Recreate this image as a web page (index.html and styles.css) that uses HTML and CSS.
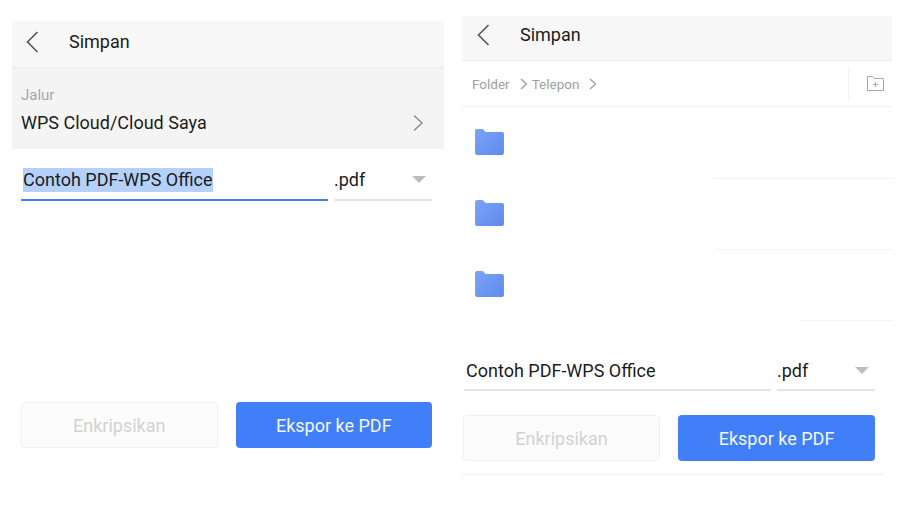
FILE: index.html
```html
<!DOCTYPE html>
<html lang="id">
<head>
  <meta charset="utf-8">
  <title>Simpan</title>
  <link rel="stylesheet" href="styles.css">
</head>
<body>
  <div class="screens">

    <!-- save to cloud path -->
    <section class="panel panel-cloud">
      <header class="topbar">
        <svg class="back" width="14" height="24" viewBox="0 0 14 24"><path d="M12.500 2 2.500 12l10 10"/></svg>
        <span class="topbar-title">Simpan</span>
      </header>
      <div class="path">
        <div class="path-label">Jalur</div>
        <div class="path-value">
          <span>WPS Cloud/Cloud Saya</span>
          <svg class="chevron" width="12" height="18" viewBox="0 0 12 18"><path d="M2 1.500 10 9l-8 7.500"/></svg>
        </div>
      </div>
      <div class="name-row">
        <div class="name-field name-field-active"><span class="selected">Contoh PDF-WPS Office</span></div>
        <div class="ext-field"><span>.pdf</span><i class="caret"></i></div>
      </div>
      <div class="actions">
        <button class="btn btn-disabled">Enkripsikan</button>
        <button class="btn btn-primary">Ekspor ke PDF</button>
      </div>
    </section>

    <!-- save to local folder -->
    <section class="panel panel-local">
      <header class="topbar">
        <svg class="back" width="14" height="24" viewBox="0 0 14 24"><path d="M12.500 2 2.500 12l10 10"/></svg>
        <span class="topbar-title">Simpan</span>
      </header>
      <div class="crumbs">
        <span>Folder</span>
        <svg class="crumb-arrow" width="8" height="12" viewBox="0 0 8 12"><path d="M1 1l5.500 5L1 11"/></svg>
        <span>Telepon</span>
        <svg class="crumb-arrow" width="8" height="12" viewBox="0 0 8 12"><path d="M1 1l5.500 5L1 11"/></svg>
        <div class="crumbs-add">
          <svg width="17" height="15" viewBox="0 0 17 15"><path d="M.5 14.500V.5h5l1.500 2h9.500v12zM8.500 6v5M6 8.500h5"/></svg>
        </div>
      </div>
      <ul class="folders">
        <li class="folder-row line-long"><svg class="folder" width="30" height="27" viewBox="0 0 30 27"><defs><linearGradient id="fill" x1="0" y1="0" x2="1" y2="1"><stop offset="0" stop-color="#7ba3f8"/><stop offset="1" stop-color="#5d8bee"/></linearGradient></defs><path fill="url(#fill)" d="M2 0h6l3 3h17a2 2 0 0 1 2 2v20a2 2 0 0 1-2 2H2a2 2 0 0 1-2-2V2a2 2 0 0 1 2-2z"/></svg></li>
        <li class="folder-row line-long"><svg class="folder" width="30" height="27" viewBox="0 0 30 27"><path fill="url(#fill)" d="M2 0h6l3 3h17a2 2 0 0 1 2 2v20a2 2 0 0 1-2 2H2a2 2 0 0 1-2-2V2a2 2 0 0 1 2-2z"/></svg></li>
        <li class="folder-row line-short"><svg class="folder" width="30" height="27" viewBox="0 0 30 27"><path fill="url(#fill)" d="M2 0h6l3 3h17a2 2 0 0 1 2 2v20a2 2 0 0 1-2 2H2a2 2 0 0 1-2-2V2a2 2 0 0 1 2-2z"/></svg></li>
      </ul>
      <div class="name-row">
        <div class="name-field"><span>Contoh PDF-WPS Office</span></div>
        <div class="ext-field"><span>.pdf</span><i class="caret"></i></div>
      </div>
      <div class="actions">
        <button class="btn btn-disabled">Enkripsikan</button>
        <button class="btn btn-primary">Ekspor ke PDF</button>
      </div>
      <div class="bottom-line"></div>
    </section>

  </div>
</body>
</html>
```

FILE: styles.css
```css
html, body {
  margin: 0;
  padding: 0;
  height: 100%;
  background: #ffffff;
}
body {
  color: #1c1c1c;
  font-family: Roboto, "Liberation Sans", sans-serif;
  font-size: 18px;
  overflow: hidden;
}
.screens {
  display: flex;
  align-items: flex-start;
  padding-left: 12px;
}
.panel {
  display: flex;
  flex-direction: column;
}
.panel-cloud {
  width: 432px;
  margin-top: 21px;
}
.panel-local {
  width: 430px;
  margin-top: 16px;
  margin-left: 18px;
}

/* top bar */
.topbar {
  display: flex;
  align-items: center;
  height: 41px;
  padding-bottom: 5px;
  background: #f7f7f7;
  border-bottom: 1px solid #ebebeb;
}
.panel-local .topbar {
  height: 37px;
  padding-bottom: 7px;
}
.back {
  margin-left: 13px;
  fill: none;
  stroke: #555555;
  stroke-width: 1.6;
}
.topbar-title {
  margin-left: 30px;
  font-size: 18px;
}
.panel-local .back {
  margin-left: 14px;
}

/* path block */
.path {
  height: 81px;
  padding: 18px 20px 0 9px;
  box-sizing: border-box;
  background: #f4f4f4;
}
.path-label {
  font-size: 15px;
  line-height: 18px;
  color: #a8a8a8;
}
.path-value {
  display: flex;
  justify-content: space-between;
  align-items: center;
  margin-top: 7px;
  line-height: 24px;
}
.chevron {
  fill: none;
  stroke: #8a8a8a;
  stroke-width: 1.4;
}

/* breadcrumb */
.crumbs {
  display: flex;
  align-items: center;
  height: 45px;
  padding-left: 10px;
  font-size: 13.500px;
  color: #a0a0a0;
  border-bottom: 1px solid #f0f0f0;
}
.crumb-arrow {
  margin: 0 4px 0 10px;
  fill: none;
  stroke: #9a9a9a;
  stroke-width: 1.2;
}
.crumbs-add {
  display: flex;
  align-items: center;
  height: 34px;
  margin-left: auto;
  padding: 0 8px 0 18px;
  border-left: 1px solid #f3f3f3;
}
.crumbs-add svg {
  fill: none;
  stroke: #a6a6a6;
  stroke-width: 1;
}

/* folder list */
.folders {
  margin: 0;
  padding: 0;
  list-style: none;
}
.folder-row {
  position: relative;
  display: flex;
  align-items: center;
  height: 71px;
  padding: 0 0 2px 13px;
  box-sizing: border-box;
}
.folder-row::after {
  content: "";
  position: absolute;
  right: 0;
  bottom: -1px;
  height: 1px;
  background: #f2f2f2;
}
.line-long::after {
  width: 177px;
}
.line-short::after {
  width: 92px;
}
.folder {
  width: 29px;
  height: 26px;
}

/* file name */
.name-row {
  display: flex;
  align-items: flex-end;
  gap: 6px;
  height: 52px;
  padding-left: 9px;
  width: 411px;
}
.panel-local .name-row {
  height: 71px;
  padding-left: 2px;
}
.name-field {
  flex: 0 0 307px;
  height: 32px;
  padding-left: 2px;
  box-sizing: border-box;
  line-height: 24px;
  border-bottom: 2px solid #e4e4e4;
}
.panel-cloud .name-field {
  height: 33px;
}
.name-field-active {
  border-bottom-color: #3f7ef0;
}
.selected {
  display: inline-block;
  background: #b5d1fb;
}
.ext-field {
  display: flex;
  justify-content: space-between;
  align-items: center;
  flex: 0 0 98px;
  height: 32px;
  box-sizing: border-box;
  padding: 0 6px 8px 0;
  border-bottom: 2px solid #e4e4e4;
}
.panel-cloud .ext-field {
  height: 33px;
  padding-bottom: 9px;
}
.caret {
  width: 0;
  height: 0;
  border-left: 7px solid transparent;
  border-right: 7px solid transparent;
  border-top: 7px solid #bdbdbd;
}

/* buttons */
.actions {
  display: grid;
  grid-template-columns: 1fr 1fr;
  gap: 18px;
  width: 411px;
  margin-top: 201px;
  padding-left: 9px;
}
.panel-local .actions {
  margin-top: 24px;
  padding-left: 1px;
  width: 412px;
}
.btn {
  height: 46px;
  padding: 0;
  font-family: inherit;
  font-size: 18px;
  border-radius: 4px;
}
.btn-disabled {
  color: #d2d2d2;
  background: #fcfcfc;
  border: 1px solid #f0f0f0;
}
.btn-primary {
  color: #f2f6ff;
  background: #417ff9;
  border: 0;
}
.bottom-line {
  height: 1px;
  width: 421px;
  margin-top: 13px;
  background: #efefef;
}
```
